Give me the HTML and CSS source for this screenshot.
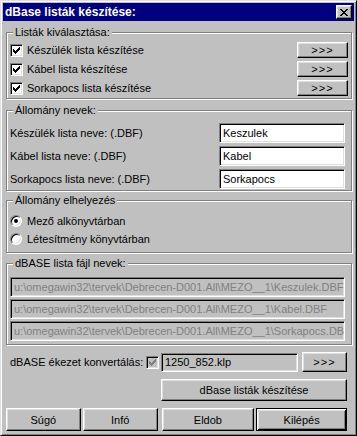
FILE: index.html
```html
<!DOCTYPE html>
<html lang="hu">
<head>
    <meta charset="UTF-8">
    <title>dBase listák készítése</title>
    <link rel="stylesheet" href="styles.css">
</head>
<body>
    <div class="window">
        <div class="titlebar">
            <span class="title">dBase listák készítése:</span>
            <span class="close">
                <svg width="8" height="7" viewBox="0 0 8 7" shape-rendering="crispEdges">
                    <rect x="0" y="0" width="2" height="1"/><rect x="6" y="0" width="2" height="1"/>
                    <rect x="1" y="1" width="2" height="1"/><rect x="5" y="1" width="2" height="1"/>
                    <rect x="2" y="2" width="4" height="1"/>
                    <rect x="3" y="3" width="2" height="1"/>
                    <rect x="2" y="4" width="4" height="1"/>
                    <rect x="1" y="5" width="2" height="1"/><rect x="5" y="5" width="2" height="1"/>
                    <rect x="0" y="6" width="2" height="1"/><rect x="6" y="6" width="2" height="1"/>
                </svg>
            </span>
        </div>

        <div class="content">
            <fieldset class="group lists">
                <legend>Listák kiválasztása:</legend>
                <div class="row">
                    <span class="check on"></span>
                    <span class="label">Készülék lista készítése</span>
                    <button class="btn more">&gt;&gt;&gt;</button>
                </div>
                <div class="row">
                    <span class="check on"></span>
                    <span class="label">Kábel lista készítése</span>
                    <button class="btn more">&gt;&gt;&gt;</button>
                </div>
                <div class="row">
                    <span class="check on"></span>
                    <span class="label">Sorkapocs lista készítése</span>
                    <button class="btn more">&gt;&gt;&gt;</button>
                </div>
            </fieldset>

            <fieldset class="group names">
                <legend>Állomány nevek:</legend>
                <div class="row">
                    <span class="label">Készülék lista neve: (.DBF)</span>
                    <span class="field name">Keszulek</span>
                </div>
                <div class="row">
                    <span class="label">Kábel lista neve: (.DBF)</span>
                    <span class="field name">Kabel</span>
                </div>
                <div class="row">
                    <span class="label">Sorkapocs lista neve: (.DBF)</span>
                    <span class="field name">Sorkapocs</span>
                </div>
            </fieldset>

            <fieldset class="group place">
                <legend>Állomány elhelyezés</legend>
                <div class="row">
                    <span class="radio on"></span>
                    <span class="label">Mező alkönyvtárban</span>
                </div>
                <div class="row">
                    <span class="radio"></span>
                    <span class="label">Létesítmény könyvtárban</span>
                </div>
            </fieldset>

            <fieldset class="group files">
                <legend>dBASE lista fájl nevek:</legend>
                <div class="field disabled">u:\omegawin32\tervek\Debrecen-D001.All\MEZO__1\Keszulek.DBF</div>
                <div class="field disabled">u:\omegawin32\tervek\Debrecen-D001.All\MEZO__1\Kabel.DBF</div>
                <div class="field disabled">u:\omegawin32\tervek\Debrecen-D001.All\MEZO__1\Sorkapocs.DBF</div>
            </fieldset>

            <div class="convert">
                <span class="label">dBASE ékezet konvertálás:</span>
                <span class="check on off"></span>
                <span class="field klp">1250_852.klp</span>
                <button class="btn more small">&gt;&gt;&gt;</button>
            </div>

            <div class="make">
                <button class="btn">dBase listák készítése</button>
            </div>

            <div class="buttons">
                <button class="btn help">Súgó</button>
                <button class="btn info">Infó</button>
                <button class="btn drop">Eldob</button>
                <button class="btn exit">Kilépés</button>
            </div>
        </div>
    </div>
</body>
</html>
```

FILE: styles.css
```css
body {
    margin: 0;
    background: #c0c0c0;
    font-family: "Liberation Sans", Arial, sans-serif;
    font-size: 11px;
    color: #000;
}
.window {
    width: 357px;
    height: 436px;
    box-sizing: border-box;
    background: #c0c0c0;
    border: 1px solid;
    border-color: #dfdfdf #000 #000 #dfdfdf;
    box-shadow: inset 1px 1px #fff, inset -1px -1px #808080;
    padding: 2px;
}
.titlebar {
    height: 18px;
    background: #000080;
    color: #fff;
    display: flex;
    align-items: center;
    justify-content: space-between;
    padding: 0 2px 0 2px;
}
.title {
    font-weight: bold;
    font-size: 12px;
}
.close {
    width: 16px;
    height: 14px;
    box-sizing: border-box;
    background: #c0c0c0;
    border: 1px solid;
    border-color: #fff #000 #000 #fff;
    box-shadow: inset -1px -1px #808080, inset 1px 1px #dfdfdf;
    display: flex;
    align-items: center;
    justify-content: center;
}
.content {
    padding: 0 2px 0 3px;
}

/* group boxes */
.group {
    margin: 0;
    padding: 0 3px;
    border: 1px solid #808080;
    box-shadow: inset 1px 1px #fff, 1px 1px #fff;
    min-width: 0;
}
.group legend {
    margin-left: 3px;
    padding: 0 2px;
    line-height: 13px;
    background: #c0c0c0;
}
.lists {
    margin-top: 5px;
    padding-top: 3px;
    padding-bottom: 2px;
}
.names {
    margin-top: 5px;
    padding-top: 6px;
    padding-bottom: 1px;
}
.place {
    margin-top: 3px;
    padding-top: 5px;
    padding-bottom: 4px;
}
.files {
    margin-top: 4px;
    padding-top: 7px;
    padding-bottom: 3px;
}
.row {
    display: flex;
    align-items: center;
}
.lists .row {
    height: 16px;
    margin-bottom: 3px;
}
.lists .row:last-child {
    margin-bottom: 0;
}
.names .row {
    height: 20px;
    margin-bottom: 3px;
}
.names .row:last-child {
    margin-bottom: 0;
}
.place .row {
    height: 18px;
}
.row .label {
    flex: 1;
}

/* controls */
.check {
    width: 13px;
    height: 13px;
    box-sizing: border-box;
    margin-right: 4px;
    background: #fff;
    border: 1px solid;
    border-color: #808080 #fff #fff #808080;
    box-shadow: inset 1px 1px #000, inset -1px -1px #dfdfdf;
    position: relative;
}
.check.on::after {
    content: "";
    position: absolute;
    left: 2px;
    top: 2px;
    width: 7px;
    height: 7px;
    background: url("data:image/svg+xml;utf8,<svg xmlns='http://www.w3.org/2000/svg' width='7' height='7' shape-rendering='crispEdges'><path d='M0 2h1v3h-1zM1 3h1v3h-1zM2 4h1v3h-1zM3 3h1v3h-1zM4 2h1v3h-1zM5 1h1v3h-1zM6 0h1v3h-1z' fill='black'/></svg>");
}
.check.off {
    background: #c0c0c0;
}
.check.off::after {
    background: url("data:image/svg+xml;utf8,<svg xmlns='http://www.w3.org/2000/svg' width='7' height='7' shape-rendering='crispEdges'><path d='M0 2h1v3h-1zM1 3h1v3h-1zM2 4h1v3h-1zM3 3h1v3h-1zM4 2h1v3h-1zM5 1h1v3h-1zM6 0h1v3h-1z' fill='%23808080'/></svg>");
}
.radio {
    width: 12px;
    height: 12px;
    box-sizing: border-box;
    margin-right: 5px;
    border-radius: 50%;
    background: #fff;
    border: 1px solid;
    border-color: #808080 #fff #fff #808080;
    box-shadow: inset 1px 1px #000, inset -1px -1px #dfdfdf;
    position: relative;
}
.radio.on::after {
    content: "";
    position: absolute;
    left: 3px;
    top: 3px;
    width: 4px;
    height: 4px;
    border-radius: 50%;
    background: #000;
}
.btn {
    font-family: inherit;
    font-size: 11px;
    color: #000;
    background: #c0c0c0;
    border: 1px solid;
    border-color: #fff #000 #000 #fff;
    box-shadow: inset -1px -1px #808080, inset 1px 1px #dfdfdf;
    padding: 0;
    margin: 0;
}
.more {
    width: 51px;
    height: 16px;
    line-height: 12px;
    letter-spacing: 1px;
}
.field {
    box-sizing: border-box;
    height: 20px;
    padding: 0 3px;
    line-height: 18px;
    background: #fff;
    border: 1px solid;
    border-color: #808080 #fff #fff #808080;
    box-shadow: inset 1px 1px #000, inset -1px -1px #dfdfdf;
    white-space: nowrap;
    overflow: hidden;
}
.field.name {
    width: 126px;
    margin-right: 3px;
}
.field.disabled {
    background: #c0c0c0;
    color: #808080;
    margin: 0 3px 2px 0;
}
.field.disabled:last-child {
    margin-bottom: 0;
}

/* bottom part */
.convert {
    display: flex;
    align-items: center;
    height: 20px;
    margin: 7px 5px 0 4px;
}
.convert .label {
    flex: 1;
}
.convert .check {
    margin-right: 2px;
}
.field.klp {
    width: 137px;
    height: 19px;
    line-height: 17px;
    background: #c0c0c0;
}
.more.small {
    width: 45px;
    height: 20px;
    margin-left: 4px;
}
.make {
    display: flex;
    justify-content: flex-end;
    margin: 7px 5px 0 0;
}
.make .btn {
    width: 186px;
    height: 22px;
}
.buttons {
    display: flex;
    margin: 7px 5px 0 0;
}
.buttons .btn {
    height: 23px;
}
.help, .info {
    width: 75px;
}
.info {
    margin-left: 2px;
}
.drop {
    width: 93px;
    margin-left: 4px;
}
.exit {
    width: 91px;
    margin-left: 2px;
    border-color: #000;
    box-shadow: inset 1px 1px #fff, inset -1px -1px #000, inset 2px 2px #dfdfdf, inset -2px -2px #808080;
}
```
